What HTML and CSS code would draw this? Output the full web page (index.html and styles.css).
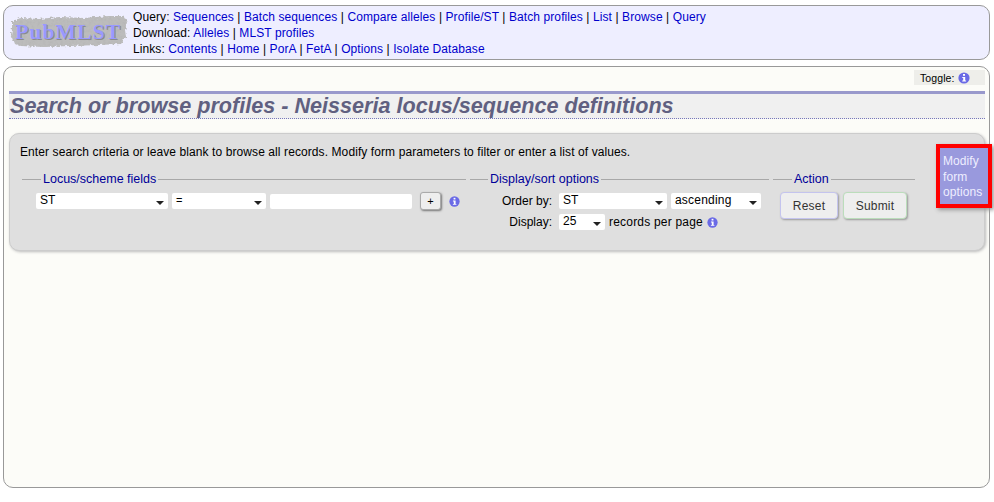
FILE: index.html
```html
<!DOCTYPE html>
<html lang="en">
<head>
    <meta charset="UTF-8">
    <title>Search or browse profiles - Neisseria locus/sequence definitions</title>
    <link rel="stylesheet" href="styles.css">
</head>
<body>
    <header class="menu">
        <svg class="logo" width="120" height="40" viewBox="0 0 120 40">
            <defs>
                <filter id="rough" x="-5%" y="-10%" width="110%" height="120%">
                    <feTurbulence type="fractalNoise" baseFrequency="0.35" numOctaves="2" seed="4" result="noise"/>
                    <feDisplacementMap in="SourceGraphic" in2="noise" scale="5" result="edge"/>
                    <feColorMatrix in="noise" type="matrix" values="0 0 0 0 0.45  0 0 0 0 0.45  0 0 0 0 0.45  1.4 0 0 0 -0.55" result="speck"/>
                    <feComposite in="speck" in2="edge" operator="in" result="speckle"/>
                    <feMerge>
                        <feMergeNode in="edge"/>
                        <feMergeNode in="speckle"/>
                    </feMerge>
                </filter>
            </defs>
            <path filter="url(#rough)" d="M3 8 L12 5 L30 6 L50 4 L75 5 L100 3 L115 3 L118 9 L116 17 L117 24 L112 31 L90 32 L60 33 L35 34 L12 33 L5 30 L2 22 L3 15 Z" fill="#bcbcbc"/>
            <text class="logo-shadow" x="60" y="27" text-anchor="middle">PubMLST</text>
            <text class="logo-text" x="59" y="26" text-anchor="middle">PubMLST</text>
        </svg>
        <div class="menu-links">
            <div>Query: <a href="#">Sequences</a> | <a href="#">Batch sequences</a> | <a href="#">Compare alleles</a> | <a href="#">Profile/ST</a> | <a href="#">Batch profiles</a> | <a href="#">List</a> | <a href="#">Browse</a> | <a href="#">Query</a></div>
            <div>Download: <a href="#">Alleles</a> | <a href="#">MLST profiles</a></div>
            <div>Links: <a href="#">Contents</a> | <a href="#">Home</a> | <a href="#">PorA</a> | <a href="#">FetA</a> | <a href="#">Options</a> | <a href="#">Isolate Database</a></div>
        </div>
    </header>

    <main class="content">
        <div class="toggle-row">
            <div class="toggle">Toggle:
                <svg class="info info-big" viewBox="0 0 12 12"><use href="#info-icon"/></svg>
            </div>
        </div>
        <h1>Search or browse profiles - Neisseria locus/sequence definitions</h1>

        <section class="queryform">
            <p>Enter search criteria or leave blank to browse all records. Modify form parameters to filter or enter a list of values.</p>
            <div class="fieldsets">
                <fieldset class="fs-locus">
                    <legend>Locus/scheme fields</legend>
                    <div class="row">
                        <div class="select w-134">ST</div>
                        <div class="select w-94 small">=</div>
                        <input class="text-input" type="text">
                        <button class="btn-plus">+</button>
                        <svg class="info" viewBox="0 0 12 12"><use href="#info-icon"/></svg>
                    </div>
                </fieldset>
                <fieldset class="fs-display">
                    <legend>Display/sort options</legend>
                    <div class="row">
                        <span class="label">Order by:</span>
                        <div class="select w-110">ST</div>
                        <div class="select w-90">ascending</div>
                    </div>
                    <div class="row row-display">
                        <span class="label">Display:</span>
                        <div class="select w-46">25</div>
                        <span class="per-page">records per page</span>
                        <svg class="info" viewBox="0 0 12 12"><use href="#info-icon"/></svg>
                    </div>
                </fieldset>
                <fieldset class="fs-action">
                    <legend>Action</legend>
                    <div class="row">
                        <button class="btn btn-reset">Reset</button>
                        <button class="btn btn-submit">Submit</button>
                    </div>
                </fieldset>
            </div>
        </section>
    </main>

    <aside class="modify">Modify form options</aside>

    <svg class="defs" width="0" height="0">
        <symbol id="info-icon" viewBox="0 0 12 12">
            <circle cx="6" cy="6" r="5.6" fill="#6a6ae6"/>
            <rect x="5" y="2" width="2" height="1.8" fill="#fff"/>
            <path d="M4.3 5h2.9v3.6h.9v1H4.2v-1h1V6h-.9z" fill="#fff"/>
        </symbol>
    </svg>
</body>
</html>
```
FILE: styles.css
```css
html, body {
    height: 100%;
}

body {
    margin: 0;
    padding: 5px 4px 14px 3px;
    box-sizing: border-box;
    background: #fff;
    color: #000;
    font-family: "Liberation Sans", Arial, sans-serif;
    font-size: 12px;
    letter-spacing: 0.09px;
    display: flex;
    flex-direction: column;
    position: relative;
}

a {
    color: #0000cc;
    text-decoration: none;
}

.defs {
    position: absolute;
}

.menu {
    height: 55px;
    box-sizing: border-box;
    flex: none;
    display: flex;
    align-items: center;
    gap: 4px;
    padding: 0 0 0 5px;
    background: #eeeeff;
    border: 1px solid #999;
    border-radius: 10px;
}

.logo {
    flex: none;
}

.logo text {
    font-family: "Liberation Serif", serif;
    font-size: 22px;
    font-weight: bold;
    letter-spacing: 0.8px;
}

.logo-text {
    fill: #9999ff;
}

.logo-shadow {
    fill: #8a8a8a;
}

.menu-links {
    line-height: 16px;
}

.content {
    flex: 1;
    margin-top: 6px;
    padding: 3px 4px 0 5px;
    background: #fcfcf8;
    border: 1px solid #999;
    border-radius: 10px;
}

.toggle-row {
    display: flex;
    justify-content: flex-end;
}

.toggle {
    width: 71px;
    height: 15px;
    box-sizing: border-box;
    padding-left: 6px;
    display: flex;
    align-items: center;
    gap: 3px;
    background: #eeeeea;
    font-size: 10.5px;
}

h1 {
    margin: 6px 0 0;
    height: 24px;
    background: #f0f0f0;
    border-top: 3px solid #9999cc;
    border-bottom: 1px dotted #7777bb;
    padding-left: 1px;
    color: #606080;
    font-size: 21.6px;
    line-height: 24px;
    letter-spacing: 0;
    font-style: italic;
    font-weight: bold;
    white-space: nowrap;
}

.queryform {
    margin-top: 14px;
    height: 118px;
    box-sizing: border-box;
    padding: 11px 10px 0;
    background: #dfdfdf;
    border: 1px solid #ccc;
    border-radius: 10px;
    box-shadow: 1px 1px 3px #bbb;
}

.queryform p {
    margin: 0;
    line-height: 14px;
}

.fieldsets {
    display: flex;
    margin-top: 13px;
    margin-left: 2px;
    gap: 4px;
}

fieldset {
    margin: 0;
    padding: 0;
    min-width: 0;
    border: 0;
    border-top: 1px solid #a8a8a8;
}

legend {
    margin-left: 19px;
    padding: 0 2px;
    color: #000099;
    font-size: 12.5px;
    line-height: 14px;
    letter-spacing: 0;
}

.fs-locus {
    width: 444px;
}

.fs-locus .row {
    padding-left: 14px;
}

.fs-display {
    width: 299px;
}

.fs-display legend {
    margin-left: 18px;
}

.fs-action {
    width: 142px;
}

.fs-action .row {
    padding-left: 7px;
    gap: 5px;
}

.row {
    display: flex;
    align-items: center;
    gap: 4px;
    margin-top: 6px;
    min-height: 18px;
}

.select {
    height: 16px;
    box-sizing: border-box;
    padding-left: 4px;
    line-height: 15px;
    background: #fff;
    border-radius: 2px;
    position: relative;
}

.select::after {
    content: "";
    position: absolute;
    right: 4px;
    top: 8px;
    border: 4px solid transparent;
    border-top-color: #222;
    border-bottom: 0;
}

.small {
    font-size: 11px;
}

.w-134 { width: 132px; }
.w-94 { width: 94px; }
.w-110 { width: 108px; }
.w-90 { width: 90px; letter-spacing: 0.2px; }
.w-46 { width: 46px; }

.text-input {
    width: 142px;
    height: 15px;
    box-sizing: border-box;
    border: 0;
    padding: 0;
    background: #fff;
    border-radius: 2px;
}

.btn-plus {
    width: 21px;
    height: 18px;
    margin-left: 4px;
    padding: 0;
    font-size: 11px;
    font-family: inherit;
    background: #eee;
    border: 1px solid #aaa;
    border-radius: 3px;
    box-shadow: 1px 1px 2px #777;
}

.info {
    width: 11px;
    height: 11px;
    margin-left: 4px;
    flex: none;
}

.info-big {
    width: 12px;
    height: 12px;
    margin-left: 0;
}

.label {
    width: 82px;
    margin-right: 3px;
    text-align: right;
    letter-spacing: 0;
}

.row-display {
    margin-top: 3px;
}

.per-page {
    letter-spacing: 0.2px;
}

.row-display .info {
    margin-left: 0;
}

.btn {
    height: 27px;
    padding: 0;
    font-family: inherit;
    font-size: 12px;
    letter-spacing: 0.2px;
    color: #333;
    background: #eee;
    border-radius: 4px;
    box-shadow: 1px 1px 2px #999;
}

.btn-reset {
    width: 58px;
    border: 1px solid #c4c4ee;
}

.btn-submit {
    width: 64px;
    border: 1px solid #bbddbb;
}

.modify {
    position: absolute;
    left: 936px;
    top: 144px;
    width: 45px;
    height: 50px;
    padding: 6px 0 0 3px;
    border: 4px solid #f00;
    background: #9999dd;
    color: #eeeeff;
    line-height: 15.5px;
    box-shadow: 2px 2px 4px #999;
}
```
